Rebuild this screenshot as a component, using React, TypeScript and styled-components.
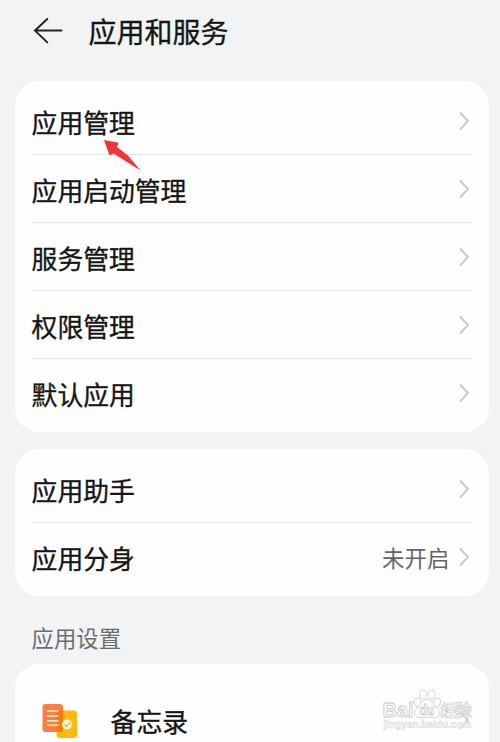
import React from 'react';
import styled, { createGlobalStyle } from 'styled-components';

const GlobalStyle = createGlobalStyle`
  * { box-sizing: border-box; }
  html, body { margin: 0; background: #f1f3f5; overflow: hidden; }
  body { font-family: "Noto Sans CJK SC", sans-serif; color: #161616; }
`;

const Screen = styled.main`
  position: relative;
  width: 500px;
  height: 742px;
  padding: 0 11px 0 15px;
  background: #f1f3f5;
  overflow: hidden;
`;

const Header = styled.header`
  display: flex;
  align-items: center;
  height: 81px;
  padding: 0 0 20px 18px;
`;

const BackIcon = styled.svg`
  width: 30px;
  height: 28px;
  flex: none;
`;

const Title = styled.h1`
  margin: 0 0 0 25.5px;
  font-size: 28px;
  line-height: 40px;
  font-weight: 400;
  -webkit-text-stroke: 0.35px #1b1c1e;
`;

const Card = styled.section<{ $gap?: number }>`
  padding: 5px 17px 6px 16px;
  margin-bottom: ${(p) => p.$gap ?? 0}px;
  border-radius: 24px;
  background: #fefefe;
`;

const Row = styled.div`
  display: flex;
  align-items: center;
  height: 68px;
  padding-top: 4px;

  & + & {
    box-shadow: inset 0 1px #e3e3e3;
  }
`;

const Label = styled.span`
  flex: 1;
  padding-left: 0.6px;
  font-size: 25.8px;
  line-height: 38px;
  -webkit-text-stroke: 0.35px #161616;
`;

const Value = styled.span`
  margin: -2px 8.5px 0 0;
  font-size: 22.5px;
  line-height: 32px;
  color: #666;
`;

const ChevronIcon = styled.svg`
  width: 12px;
  height: 20px;
  margin: 0 2px 2px 0;
  flex: none;
`;

const SectionLabel = styled.h2`
  margin: 0;
  height: 68px;
  padding: 25px 0 0 16.5px;
  font-size: 22.4px;
  line-height: 32px;
  font-weight: 400;
  color: #6c6d6f;
`;

const AppCard = styled(Card)`
  height: 110px;
  padding-top: 17px;
`;

const AppRow = styled(Row)`
  height: 80px;
  padding-top: 0;
`;

const MemoIcon = styled.svg`
  width: 36px;
  height: 36px;
  margin: 0 32px 0 11px;
  flex: none;
`;

const Pointer = styled.svg`
  position: absolute;
  left: 103px;
  top: 139px;
  width: 39px;
  height: 34px;
`;

const Watermark = styled.svg`
  position: absolute;
  left: 376px;
  top: 682px;
  width: 104px;
  height: 54px;
`;

const Chevron = () => (
  <ChevronIcon viewBox="0 0 12 20" fill="none" stroke="#cacaca" strokeWidth="2">
    <path d="M2 1.5 10 10 2 18.5" />
  </ChevronIcon>
);

const general = ['应用管理', '应用启动管理', '服务管理', '权限管理', '默认应用'];
const tools = [{ name: '应用助手' }, { name: '应用分身', value: '未开启' }];

export default function App() {
  return (
    <>
      <GlobalStyle />
      <Screen>
        <Header>
          <BackIcon viewBox="0 0 30 28" fill="none" stroke="#232426" strokeWidth="2" strokeLinecap="round">
            <path d="M14.3 2 2 13.6 14.3 25.4M2.4 13.6H28.5" />
          </BackIcon>
          <Title>应用和服务</Title>
        </Header>
        <Card $gap={17}>
          {general.map((name) => (
            <Row key={name}>
              <Label>{name}</Label>
              <Chevron />
            </Row>
          ))}
        </Card>
        <Card>
          {tools.map((item) => (
            <Row key={item.name}>
              <Label>{item.name}</Label>
              {item.value && <Value>{item.value}</Value>}
              <Chevron />
            </Row>
          ))}
        </Card>
        <SectionLabel>应用设置</SectionLabel>
        <AppCard>
          <AppRow>
            <MemoIcon viewBox="0 0 36 36">
              <rect x="14.5" y="7.5" width="20.5" height="27.5" rx="3" fill="#fcb910" />
              <rect x="0.5" y="1" width="20.5" height="28" rx="3" fill="#f97f45" />
              <path d="M14.5 10.5a3 3 0 0 1 3-3H21V26a3 3 0 0 1-3 3h-3.5z" fill="#fb7a08" />
              <path d="M5 8H16.5M5 13H16.5M5 17.7H16.5M5 22.3H16.5" stroke="#fff4df" strokeWidth="1.6" />
              <circle cx="25" cy="21.5" r="5" fill="#fff8dd" />
              <path d="m22.5 21.5 2 2 3.5-4" fill="none" stroke="#f5b51b" strokeWidth="1.3" />
            </MemoIcon>
            <Label>备忘录</Label>
            <Chevron />
          </AppRow>
        </AppCard>
        <Pointer viewBox="0 0 39 34">
          <path d="M1 1 15.5 3.8 14 8 25 16.5 37.5 31.500 10.500 14.500 6.500 16.500z" fill="#f03538" />
        </Pointer>
        <Watermark viewBox="0 0 104 54" fill="#fefefe" stroke="#c9c9c9" strokeWidth="0.8" strokeLinejoin="round">
          <g fontFamily="Liberation Sans, sans-serif" fontWeight="700">
            <text x="6.5" y="34.5" fontSize="19.5" textLength="31" lengthAdjust="spacingAndGlyphs">Bai</text>
            <ellipse cx="41.5" cy="20.5" rx="3.3" ry="4.5" transform="rotate(-15 41.5 20.5)" />
            <ellipse cx="47" cy="12.5" rx="3.4" ry="4.6" />
            <ellipse cx="55.5" cy="12.5" rx="3.4" ry="4.6" />
            <ellipse cx="61" cy="20.5" rx="3.3" ry="4.5" transform="rotate(18 61 20.5)" />
            <path d="M51 17.500c-5 0-6 5-9.500 8-5 4.500-2.500 10.300 2.500 10 5-.4 9-.4 14 0 5.500 .3 7.500-5.500 2.500-10C57 22.500 56 17.500 51 17.500z" />
            <text x="43.5" y="33" fontSize="14" textLength="14.5" lengthAdjust="spacingAndGlyphs">du</text>
            <text x="64.5" y="33.5" fontFamily="Noto Sans CJK SC, sans-serif" fontSize="16" strokeWidth="0.7" textLength="31">经验</text>
            <text x="7.5" y="45.5" fontSize="10.5" fill="#f4f4f4" stroke="#dedede" strokeWidth="0.6" textLength="88" lengthAdjust="spacingAndGlyphs">jingyan.baidu.com</text>
          </g>
        </Watermark>
      </Screen>
    </>
  );
}
